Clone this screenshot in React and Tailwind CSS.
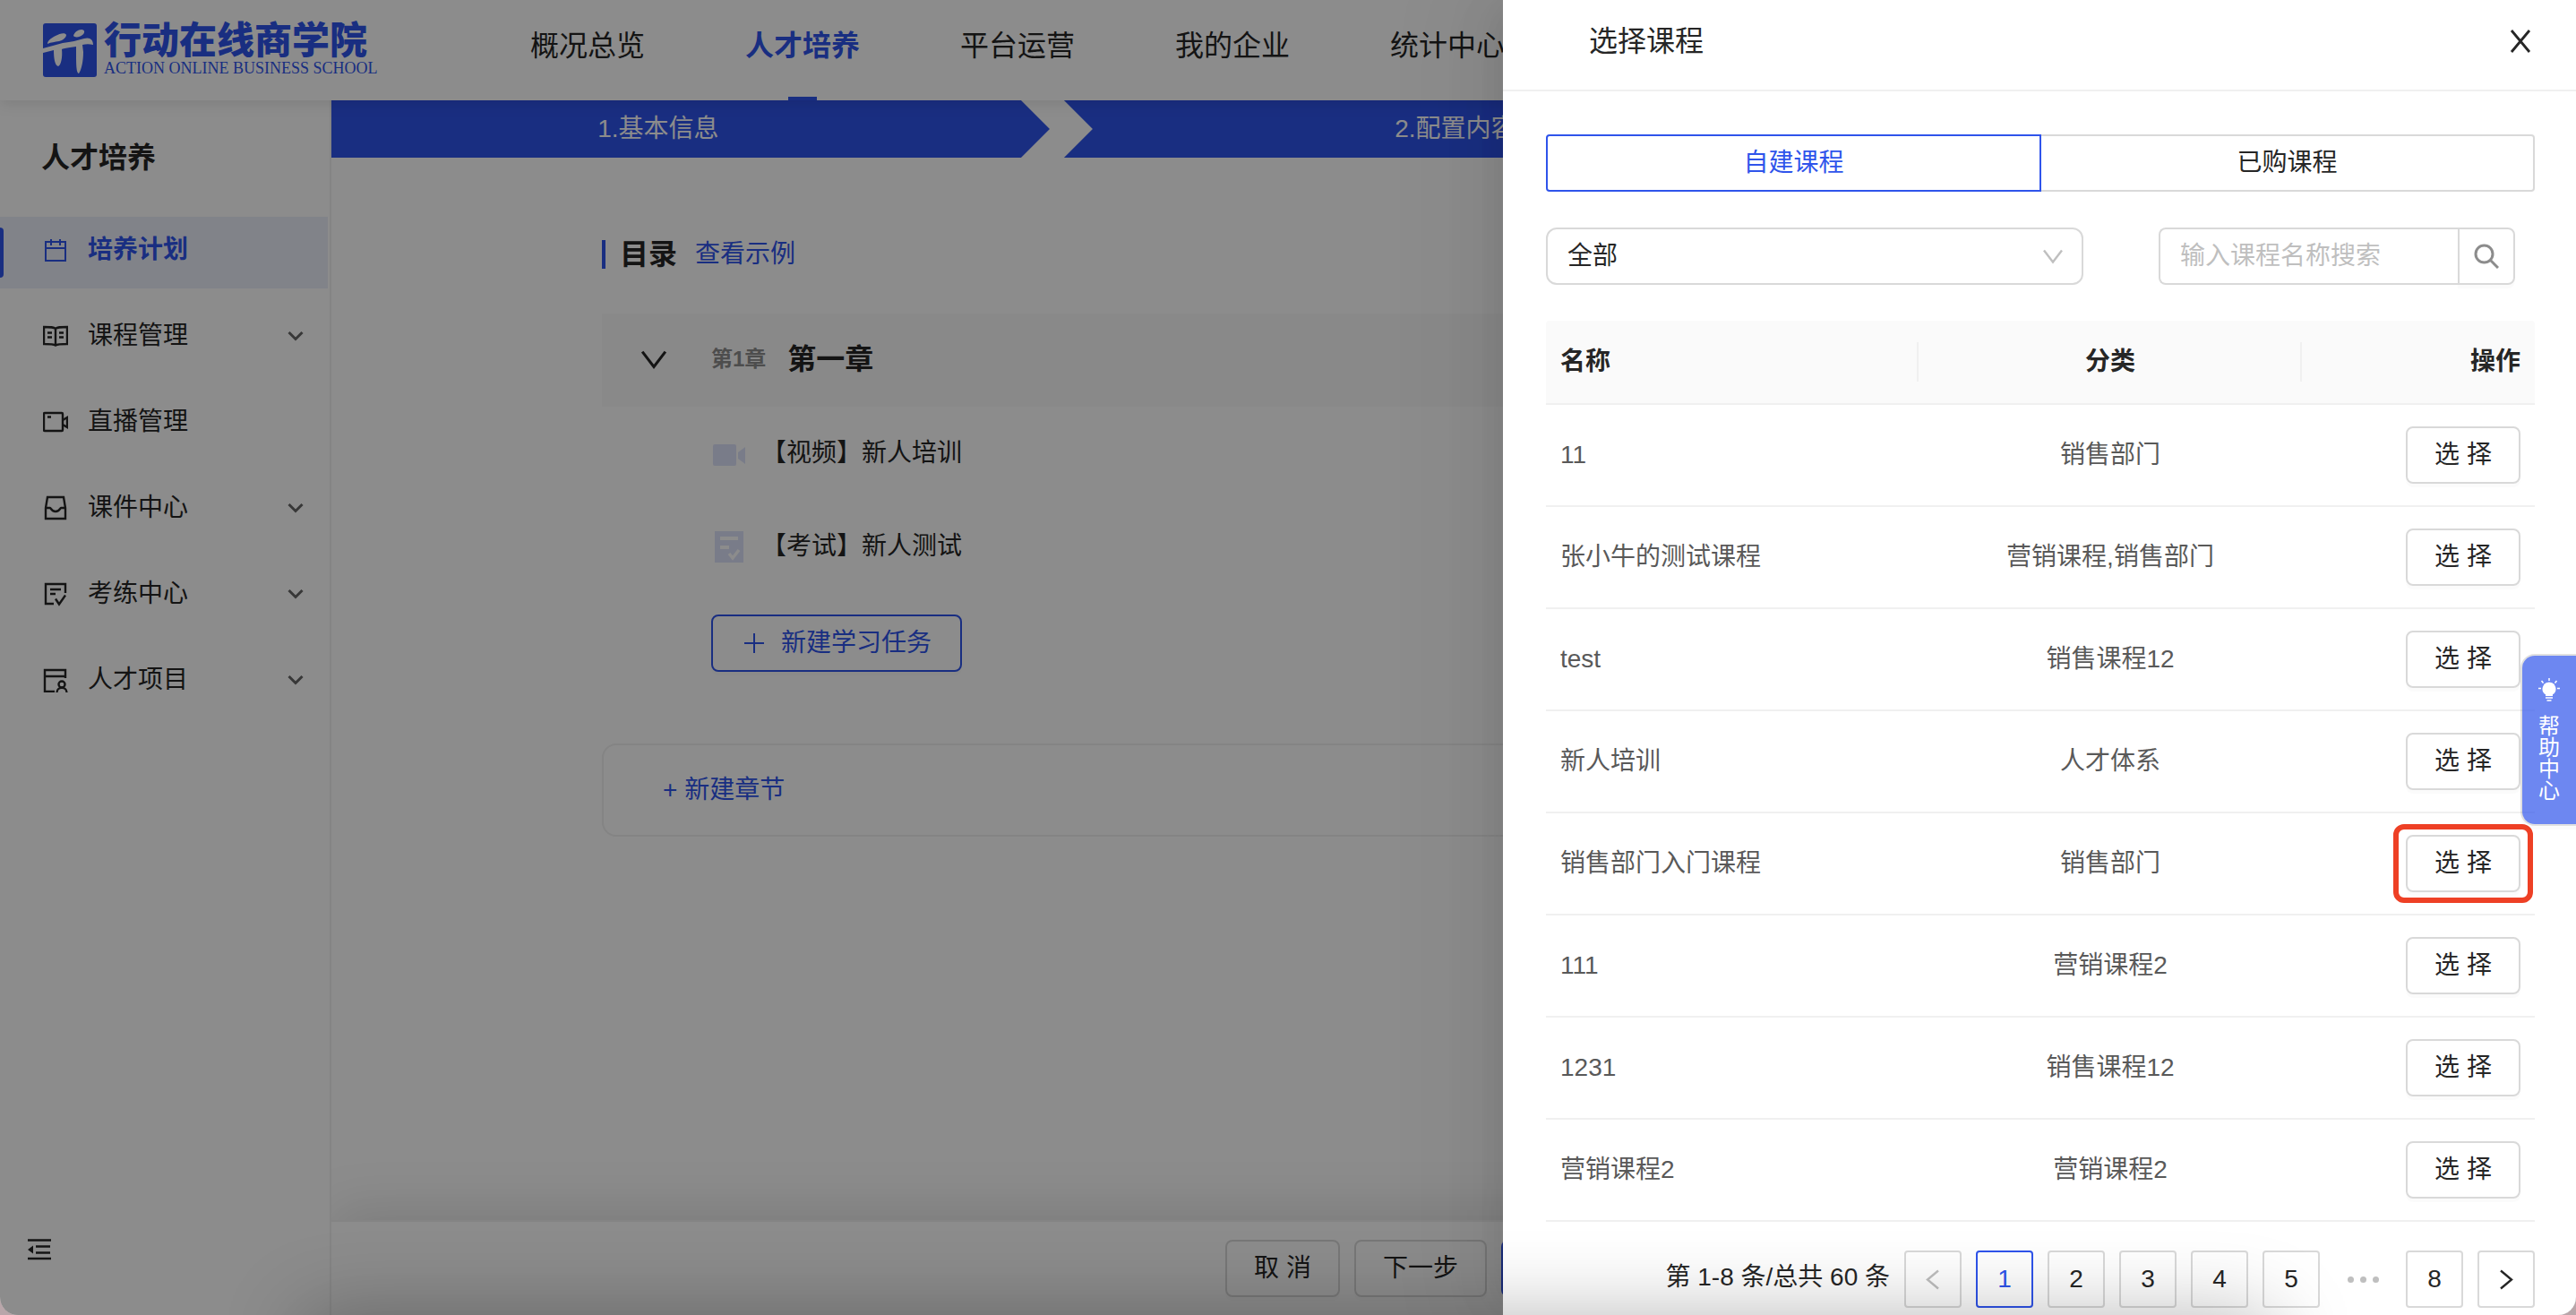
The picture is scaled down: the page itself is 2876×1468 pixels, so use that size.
import { useState } from 'react';
import clsx from 'clsx';

const NAV = ['概况总览', '人才培养', '平台运营', '我的企业', '统计中心'];

const COURSES = [
  { name: '11', category: '销售部门' },
  { name: '张小牛的测试课程', category: '营销课程,销售部门' },
  { name: 'test', category: '销售课程12' },
  { name: '新人培训', category: '人才体系' },
  { name: '销售部门入门课程', category: '销售部门', highlighted: true },
  { name: '111', category: '营销课程2' },
  { name: '1231', category: '销售课程12' },
  { name: '营销课程2', category: '营销课程2' },
];

/* ---------- Icons ---------- */

function Icon({ children, className = 'size-7', width = 2.4 }) {
  return (
    <svg
      viewBox="0 0 28 28"
      fill="none"
      stroke="currentColor"
      strokeWidth={width}
      className={clsx('shrink-0', className)}
      aria-hidden="true"
    >
      {children}
    </svg>
  );
}

const CalendarIcon = () => (
  <Icon width={2}>
    <path d="M3 5h22v21H3zM3 12h22M9 2v7M19 2v7" />
  </Icon>
);

const BookIcon = () => (
  <Icon>
    <path d="M14 6c-2-2-5-2-13-2v19c8 0 11 0 13 1.500 2-1.500 5-1.500 13-1.500V4c-8 0-11 0-13 2zM14 6v18M5 10.500h5M5 15.500h5M18 10.500h5M18 15.500h5" />
  </Icon>
);

const LiveIcon = () => (
  <Icon>
    <rect x="1" y="4" width="21" height="20" rx="1" />
    <path d="M5 8.500h4M22 12l5-3v11l-5-3" />
  </Icon>
);

const InboxIcon = () => (
  <Icon>
    <path d="M5 2h18l2 12v12H3V14zM3 14h5c1 0 1 4 6 4s5-4 6-4h5" />
  </Icon>
);

const ExamIcon = () => (
  <Icon>
    <path d="M25 13V3H3v22h9M8 9h12M8 14h6M14 19.500l4 6 7-10" />
  </Icon>
);

const ProjectIcon = () => (
  <Icon>
    <path d="M25 12V3H2v24h11M2 10h23" />
    <circle cx="21" cy="19" r="3.500" />
    <path d="M15.500 28c0-7 11-7 11 0" />
  </Icon>
);

const ChevronDown = ({ className, width }) => (
  <Icon className={className} width={width}>
    <path d="M4 7.500l10 13 10-13" />
  </Icon>
);

const SmallChevron = () => (
  <svg viewBox="0 0 18 12" className="w-[18px] h-3 text-[#666]" fill="none" stroke="currentColor" strokeWidth="3" aria-hidden="true">
    <path d="M1.500 2l7.500 7.500L16.500 2" />
  </svg>
);

const PlusIcon = () => (
  <Icon width={2}>
    <path d="M14 3v22M3 14h22" />
  </Icon>
);

const CloseIcon = () => (
  <Icon width={2.8}>
    <path d="M4 2l20 24M24 2L4 26" />
  </Icon>
);

const SearchIcon = () => (
  <Icon width={3}>
    <circle cx="11.500" cy="11.500" r="9.500" />
    <path d="M18.500 18.500l8.500 8.500" />
  </Icon>
);

const FoldIcon = () => (
  <Icon>
    <path d="M1 3.500h26M10 10.500h16M10 17.500h16M1 24h26" />
    <path d="M1 14l6-4.500v9z" fill="currentColor" stroke="none" />
  </Icon>
);

const VideoIcon = () => (
  <svg viewBox="0 0 36 36" className="size-9 text-[#dde2fa]" fill="currentColor" aria-hidden="true">
    <rect y="8" width="26" height="24" rx="2" />
    <path d="M28 17l8-6v19l-8-6z" />
  </svg>
);

const PaperIcon = () => (
  <svg viewBox="0 0 36 36" className="size-9 text-[#dde2fa]" fill="currentColor" aria-hidden="true">
    <path d="M2 1h32v35H2z" />
    <path d="M8 9h20M8 19h10" stroke="#fff" strokeWidth="4" />
    <path d="M18 26l4 5 7-9" stroke="#fff" strokeWidth="3.500" fill="none" />
  </svg>
);

const BulbIcon = () => (
  <svg viewBox="0 0 24 26" className="w-6 h-[26px]" fill="none" stroke="currentColor" strokeWidth="1.500" aria-hidden="true">
    <path d="M12 0v3M3.500 3l2 2.500M20.500 3l-2 2.500M0 11.500h3M21 11.500h3M8 22h8M9.500 25h5" />
    <path d="M12 4.500a7.500 7.500 0 0 0-4 13.800V20h8v-1.700A7.500 7.500 0 0 0 12 4.500z" fill="currentColor" stroke="none" />
  </svg>
);

function Logo() {
  return (
    <a href="#home" className="flex h-[60px] w-[368px] shrink-0 items-center gap-2 text-[#2f54eb]">
      <svg viewBox="0 0 60 60" className="size-[60px] shrink-0" aria-hidden="true">
        <rect width="60" height="60" rx="3" fill="currentColor" />
        <g fill="#fff">
          <path d="M5 23c0-4 5-7 9-9 5-3 11-4 12-1 0 3-4 6-8 7-5 1-9 1-13 3z" />
          <path d="M34 14c1-4 5-7 9-7 4 0 4 4 1 6-3 3-9 3-10 1z" />
          <path d="M0 28L22 22C32 21 38 19 46 17C52 15 56 18 56 24C52 23 48 23 44 24L45 32C45 42 43 52 40 56C37 55 37 46 37 26L30 27C26 28 22 28 21 29C22 38 20 47 17 48C13 47 12 38 12 30L0 33Z" />
        </g>
      </svg>
      <span className="flex flex-col">
        <span className="text-[42px] font-black leading-[40px] whitespace-nowrap">行动在线商学院</span>
        <span className="font-['Liberation_Serif',serif] text-[18px] leading-[20px] whitespace-nowrap">
          ACTION ONLINE BUSINESS SCHOOL
        </span>
      </span>
    </a>
  );
}

const MENU = [
  { label: '培养计划', icon: CalendarIcon, active: true },
  { label: '课程管理', icon: BookIcon, children: true },
  { label: '直播管理', icon: LiveIcon },
  { label: '课件中心', icon: InboxIcon, children: true },
  { label: '考练中心', icon: ExamIcon, children: true },
  { label: '人才项目', icon: ProjectIcon, children: true },
];

/* ---------- Page ---------- */

function Header() {
  return (
    <header className="relative z-10 flex h-28 shrink-0 items-center bg-white pl-12 shadow-[0_4px_16px_rgba(0,0,0,0.1)]">
      <Logo />
      <nav className="ml-44 flex h-full gap-28">
        {NAV.map((item) => {
          const active = item === '人才培养';
          return (
            <a
              key={item}
              href="#nav"
              className={clsx(
                'relative flex items-center pb-2.5 text-[32px] whitespace-nowrap',
                active ? 'font-bold text-[#2f54eb]' : 'text-[#262626]'
              )}
            >
              {item}
              {active && <span className="absolute bottom-0 left-1/2 h-1 w-8 -translate-x-1/2 bg-[#2f54eb]" />}
            </a>
          );
        })}
      </nav>
    </header>
  );
}

function Sidebar() {
  return (
    <aside className="flex w-[370px] shrink-0 flex-col border-r-2 border-[#f0f0f0] pr-0.5">
      <h2 className="flex h-[130px] items-center pb-0.5 pl-[46px] text-[32px] font-bold">人才培养</h2>
      <nav className="flex flex-col gap-4">
        {MENU.map(({ label, icon: MenuIcon, active, children }) => (
          <a
            key={label}
            href="#menu"
            className={clsx(
              'relative flex h-20 items-center pr-[27px] pb-1.5 pl-12',
              active ? 'bg-[#ebeefa] font-bold text-[#2f54eb]' : 'text-[#262626]'
            )}
          >
            {active && <span className="absolute top-3 left-0 h-14 w-1 rounded-r bg-[#2f54eb]" />}
            <MenuIcon />
            <span className="ml-[22px] flex-1">{label}</span>
            {children && <SmallChevron />}
          </a>
        ))}
      </nav>
      <button type="button" aria-label="收起菜单" className="mt-auto mb-[59px] ml-[30px] self-start">
        <FoldIcon />
      </button>
    </aside>
  );
}

function Steps() {
  return (
    <ol className="flex h-16 shrink-0 text-white">
      <li className="flex w-[32%] items-center justify-center bg-[#2f54eb] pr-[72px] [clip-path:polygon(0_0,calc(100%-32px)_0,100%_50%,calc(100%-32px)_100%,0_100%)]">
        1.基本信息
      </li>
      <li className="ml-4 flex w-[32%] items-center justify-center bg-[#2f54eb] pl-[72px] [clip-path:polygon(0_0,calc(100%-32px)_0,100%_50%,calc(100%-32px)_100%,0_100%,32px_50%)]">
        2.配置内容
      </li>
    </ol>
  );
}

function Catalog() {
  return (
    <section className="flex-1 px-[302px] pt-[92px]">
      <div className="flex h-8 items-center">
        <span className="h-8 w-1 bg-[#2f54eb]" />
        <h3 className="ml-4 text-[32px] font-bold">目录</h3>
        <a href="#example" className="ml-5 text-[#2f54eb]">查看示例</a>
      </div>

      <div className="mt-[50px] flex h-[104px] items-center bg-[#fafafa] pb-0.5 pl-10">
        <button type="button" aria-label="折叠章节">
          <ChevronDown className="size-9" />
        </button>
        <span className="ml-[46px] text-[24px] font-bold text-[#8c8c8c]">第1章</span>
        <span className="ml-6 text-[32px] font-bold">第一章</span>
      </div>

      <ul className="pl-[124px]">
        <li className="flex h-[104px] items-center gap-[18px]">
          <VideoIcon />
          <span>【视频】新人培训</span>
        </li>
        <li className="flex h-[104px] items-center gap-[18px]">
          <PaperIcon />
          <span>【考试】新人测试</span>
        </li>
      </ul>
      <button
        type="button"
        className="mt-6 ml-[122px] flex h-16 w-[280px] items-center justify-center gap-4 rounded-lg border-2 border-[#2f54eb] text-[#2f54eb] shadow-[0_4px_0_rgba(0,0,0,0.015)]"
      >
        <PlusIcon />
        新建学习任务
      </button>

      <div className="mt-20 flex h-[104px] items-center rounded-2xl border-2 border-[#f0f0f0] pl-[66px]">
        <button type="button" className="text-[#2f54eb]">+ 新建章节</button>
      </div>
    </section>
  );
}

function PageFooter() {
  const plain = 'h-16 rounded-lg border-2 border-[#d9d9d9] shadow-[0_4px_0_rgba(0,0,0,0.015)]';
  return (
    <footer className="flex h-[106px] shrink-0 items-start justify-center gap-4 border-t-2 border-[#f0f0f0] bg-white pt-5 shadow-[0_-12px_60px_rgba(0,0,0,0.12)]">
      <button type="button" className={clsx(plain, 'w-32')}>取 消</button>
      <button type="button" className={clsx(plain, 'w-[148px]')}>下一步</button>
      <button type="button" className="h-16 w-[202px] rounded-lg bg-[#2f54eb] text-white">保存并退出</button>
    </footer>
  );
}

/* ---------- Drawer ---------- */

function Filters() {
  const [keyword, setKeyword] = useState('');

  return (
    <div className="mt-10 flex justify-between pr-[22px]">
      <div className="relative w-[600px]">
        <select
          aria-label="课程分类"
          className="h-16 w-full appearance-none rounded-xl border-2 border-[#d9d9d9] bg-white px-[22px]"
        >
          <option>全部</option>
        </select>
        <ChevronDown className="pointer-events-none absolute top-[18px] right-5 size-7 text-[#bfbfbf]" />
      </div>
      <form className="flex h-16 w-[398px]" onSubmit={(e) => e.preventDefault()}>
        <input
          type="text"
          aria-label="课程名称"
          value={keyword}
          onChange={(e) => setKeyword(e.target.value)}
          placeholder="输入课程名称搜索"
          className="min-w-0 flex-1 rounded-l-lg border-2 border-r-0 border-[#d9d9d9] px-[22px] placeholder:text-[#bfbfbf]"
        />
        <button
          type="submit"
          aria-label="搜索"
          className="flex w-16 items-center justify-center rounded-r-lg border-2 border-[#d9d9d9] text-[#8c8c8c] shadow-[0_4px_0_rgba(0,0,0,0.015)]"
        >
          <SearchIcon />
        </button>
      </form>
    </div>
  );
}

function CourseTable() {
  const divider = "relative after:absolute after:top-6 after:right-0 after:h-11 after:w-0.5 after:bg-[#f0f0f0] after:content-['']";
  return (
    <table className="mt-10 w-full table-fixed border-separate border-spacing-0">
      <thead>
        <tr className="h-[94px] [&>th]:border-b-2 [&>th]:border-[#f0f0f0] [&>th]:bg-[#fafafa] [&>th]:px-4 [&>th]:font-bold">
          <th className={clsx(divider, 'w-[416px] rounded-tl text-left')}>名称</th>
          <th className={clsx(divider, 'w-[428px] text-center')}>分类</th>
          <th className="rounded-tr text-right">操作</th>
        </tr>
      </thead>
      <tbody>
        {COURSES.map((course) => (
          <tr key={course.name} className="h-[114px] text-[#595959] [&>td]:border-b-2 [&>td]:border-[#f0f0f0] [&>td]:px-4">
            <td>{course.name}</td>
            <td className="text-center">{course.category}</td>
            <td>
              <div className="relative ml-auto h-16 w-32">
                <button
                  type="button"
                  className="h-full w-full rounded-lg border-2 border-[#d9d9d9] text-[#262626] shadow-[0_4px_0_rgba(0,0,0,0.015)]"
                >
                  选 择
                </button>
                {course.highlighted && (
                  <span className="pointer-events-none absolute -inset-x-3.5 -inset-y-3 rounded-xl border-6 border-[#ee4025]" />
                )}
              </div>
            </td>
          </tr>
        ))}
      </tbody>
    </table>
  );
}

function Pagination() {
  const [page, setPage] = useState(1);
  const box = 'flex size-16 items-center justify-center rounded border-2';

  const renderPage = (n) => (
    <button
      key={n}
      type="button"
      onClick={() => setPage(n)}
      className={clsx(box, page === n ? 'border-[#2f54eb] text-[#2f54eb]' : 'border-[#d9d9d9]')}
    >
      {n}
    </button>
  );

  return (
    <div className="mt-8 flex items-center justify-end gap-4">
      <span className="pb-1 whitespace-nowrap">第 1-8 条/总共 60 条</span>
      <button type="button" aria-label="上一页" disabled={page === 1} className={clsx(box, 'border-[#d9d9d9] text-[#bfbfbf]')}>
        <Icon><path d="M20 4.500L8 14.500l12 10" /></Icon>
      </button>
      {[1, 2, 3, 4, 5].map(renderPage)}
      <span className="flex w-16 items-center justify-center gap-[7px]">
        <i className="size-[7px] rounded-full bg-[#bfbfbf]" />
        <i className="size-[7px] rounded-full bg-[#bfbfbf]" />
        <i className="size-[7px] rounded-full bg-[#bfbfbf]" />
      </span>
      {renderPage(8)}
      <button type="button" aria-label="下一页" className={clsx(box, 'border-[#d9d9d9]')}>
        <Icon><path d="M8 4.500l12 10-12 10" /></Icon>
      </button>
    </div>
  );
}

function CourseDrawer() {
  const [tab, setTab] = useState('自建课程');

  return (
    <div
      role="dialog"
      aria-label="选择课程"
      className="absolute inset-y-0 right-0 z-30 flex w-[1198px] max-w-full flex-col bg-white shadow-[-12px_0_32px_-16px_rgba(0,0,0,0.08),-18px_0_56px_rgba(0,0,0,0.05),-24px_0_96px_32px_rgba(0,0,0,0.03)]"
    >
      <div className="flex h-[102px] shrink-0 items-center justify-between border-b-2 border-[#f0f0f0] pr-12 pb-2 pl-24">
        <h2 className="text-[32px]">选择课程</h2>
        <button type="button" aria-label="关闭">
          <CloseIcon />
        </button>
      </div>

      <div className="flex-1 pt-12 pr-[46px] pl-12">
        <div className="flex h-16">
          {['自建课程', '已购课程'].map((name) => (
            <button
              key={name}
              type="button"
              onClick={() => setTab(name)}
              className={clsx(
                'flex-1 border-2 first:rounded-l last:rounded-r',
                tab === name
                  ? 'border-[#2f54eb] text-[#2f54eb]'
                  : 'border-[#d9d9d9] first:border-r-0 last:border-l-0'
              )}
            >
              {name}
            </button>
          ))}
        </div>
        <Filters />
        <CourseTable />
        <Pagination />
      </div>
    </div>
  );
}

function HelpTab() {
  return (
    <button
      type="button"
      className="absolute top-[730px] right-0 z-40 flex h-48 w-[62px] flex-col items-center rounded-l-2xl border-2 border-r-0 border-black/12 bg-[#2f54eb]/70 bg-clip-padding pt-[25px] text-[24px] leading-6 text-white shadow-[0_4px_0_rgba(0,0,0,0.015)]"
    >
      <BulbIcon />
      <span className="mt-4 w-6">帮助中心</span>
    </button>
  );
}

export default function App() {
  return (
    <div className="h-screen bg-[#b9a6aa] font-['Liberation_Sans','Noto_Sans_CJK_SC',sans-serif] text-[28px] leading-[44px] text-[#262626]">
      <div className="relative flex h-full flex-col overflow-hidden rounded-b-[20px] bg-white">
        <Header />
        <div className="flex min-h-0 flex-1">
          <Sidebar />
          <main className="flex min-w-0 flex-1 flex-col overflow-hidden">
            <Steps />
            <Catalog />
            <PageFooter />
          </main>
        </div>
        <div className="absolute inset-0 z-20 bg-black/45" />
        <CourseDrawer />
        <HelpTab />
        {/* soft shade along the bottom edge */}
        <div className="pointer-events-none absolute inset-x-[340px] top-full z-50 h-40 shadow-[0_0_90px_rgba(0,0,0,0.28)]" />
      </div>
    </div>
  );
}
